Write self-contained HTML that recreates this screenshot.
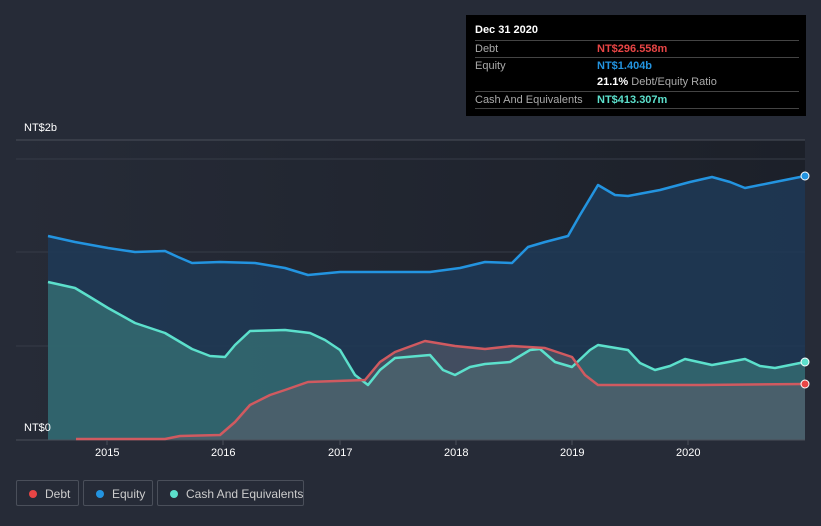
<!DOCTYPE html>
<html><head><meta charset="utf-8"><style>
body{margin:0;width:821px;height:526px;background:#262b37;font-family:"Liberation Sans",sans-serif;overflow:hidden;position:relative}
.tt{position:absolute;left:466px;top:15px;width:340px;height:101px;background:#000;color:#fff;font-size:11px}
.tt .h{position:absolute;left:9px;top:9px;font-weight:bold}
.row{position:absolute;left:9px;width:324px;border-top:1px solid #444;height:17px;line-height:17px;color:#aaa}
.row b{position:absolute;left:122px;font-weight:bold}
.lg{position:absolute;top:480px;height:26px;border:1px solid #4a4f5a;border-radius:2px;color:#ccc;font-size:12px;line-height:26px;box-sizing:border-box;white-space:nowrap}
.lg i{position:absolute;left:12px;top:9px;width:8px;height:8px;border-radius:50%}
.lg span{position:absolute;left:28px}
.ax{position:absolute;color:#fff;font-size:11px}
</style></head><body>
<svg width="821" height="526" style="position:absolute;left:0;top:0">
<defs><linearGradient id="bg" x1="0" x2="1"><stop offset="0" stop-color="#262b37"/><stop offset="1" stop-color="#1c2029"/></linearGradient></defs>
<rect x="16" y="140" width="789" height="300" fill="url(#bg)"/>
<line x1="16" y1="140" x2="805" y2="140" stroke="#4a4f5a"/>
<line x1="16" y1="159" x2="805" y2="159" stroke="#363b47"/>
<line x1="16" y1="252" x2="805" y2="252" stroke="#363b47"/>
<line x1="16" y1="346" x2="805" y2="346" stroke="#363b47"/>
<path d="M48,236 L75,242 L108,248 L135,252 L165,251 L178,257 L192,263 L220,262 L255,263 L285,268 L308,275 L340,272 L430,272 L460,268 L485,262 L512,263 L528,247 L545,242 L568,236 L580,215 L598,185 L615,195 L628,196 L660,190 L690,182 L712,177 L730,182 L745,188 L775,182 L805,176 L805,440 L48,440Z" fill="#1f3a57" fill-opacity="0.85"/>
<path d="M48,282 L75,288 L90,297 L108,308 L135,323 L165,333 L192,349 L210,356 L225,357 L235,345 L250,331 L285,330 L310,333 L325,340 L340,350 L355,375 L368,385 L380,370 L395,358 L430,355 L443,370 L455,375 L470,367 L485,364 L510,362 L530,350 L540,349 L555,362 L572,367 L590,350 L598,345 L628,350 L640,363 L655,370 L670,366 L685,359 L712,365 L745,359 L760,366 L775,368 L805,362 L805,440 L48,440Z" fill="#3a7b7b" fill-opacity="0.65"/>
<path d="M76,439 L165,439 L180,436 L220,435 L235,422 L250,405 L270,395 L285,390 L308,382 L365,380 L380,362 L395,352 L425,341 L455,346 L485,349 L512,346 L545,348 L572,357 L585,375 L598,385 L700,385 L805,384 L805,440 L76,440Z" fill="#5a5e6a" fill-opacity="0.6"/>
<line x1="16" y1="440" x2="805" y2="440" stroke="#4a4f5a"/>
<g fill="none" stroke-width="2.5" stroke-linejoin="round">
<path d="M48,236 L75,242 L108,248 L135,252 L165,251 L178,257 L192,263 L220,262 L255,263 L285,268 L308,275 L340,272 L430,272 L460,268 L485,262 L512,263 L528,247 L545,242 L568,236 L580,215 L598,185 L615,195 L628,196 L660,190 L690,182 L712,177 L730,182 L745,188 L775,182 L805,176" stroke="#2394e0"/>
<path d="M48,282 L75,288 L90,297 L108,308 L135,323 L165,333 L192,349 L210,356 L225,357 L235,345 L250,331 L285,330 L310,333 L325,340 L340,350 L355,375 L368,385 L380,370 L395,358 L430,355 L443,370 L455,375 L470,367 L485,364 L510,362 L530,350 L540,349 L555,362 L572,367 L590,350 L598,345 L628,350 L640,363 L655,370 L670,366 L685,359 L712,365 L745,359 L760,366 L775,368 L805,362" stroke="#5ce0cc"/>
<path d="M76,439 L165,439 L180,436 L220,435 L235,422 L250,405 L270,395 L285,390 L308,382 L365,380 L380,362 L395,352 L425,341 L455,346 L485,349 L512,346 L545,348 L572,357 L585,375 L598,385 L700,385 L805,384" stroke="#d05a60"/>
</g>
<circle cx="805" cy="176" r="4" fill="#2394e0" stroke="#fff"/>
<circle cx="805" cy="362" r="4" fill="#5ce0cc" stroke="#fff"/>
<circle cx="805" cy="384" r="4" fill="#e84545" stroke="#fff"/>
<g stroke="#4a4f5a"><line x1="107" y1="440" x2="107" y2="445"/><line x1="223" y1="440" x2="223" y2="445"/><line x1="340" y1="440" x2="340" y2="445"/><line x1="456" y1="440" x2="456" y2="445"/><line x1="572" y1="440" x2="572" y2="445"/><line x1="688" y1="440" x2="688" y2="445"/></g>
</svg>
<div class="ax" style="left:24px;top:122px">NT$2b</div>
<div class="ax" style="left:24px;top:422px">NT$0</div>
<div class="ax" style="left:95px;top:447px">2015</div>
<div class="ax" style="left:211px;top:447px">2016</div>
<div class="ax" style="left:328px;top:447px">2017</div>
<div class="ax" style="left:444px;top:447px">2018</div>
<div class="ax" style="left:560px;top:447px">2019</div>
<div class="ax" style="left:676px;top:447px">2020</div>
<div class="tt"><div class="h">Dec 31 2020</div>
<div class="row" style="top:25px">Debt<b style="color:#e84545">NT$296.558m</b></div>
<div class="row" style="top:42px">Equity<b style="color:#2394e0">NT$1.404b</b></div>
<div style="position:absolute;left:131px;top:59px;line-height:17px;color:#aaa"><b style="color:#fff">21.1%</b> Debt/Equity Ratio</div>
<div class="row" style="top:76px">Cash And Equivalents<b style="color:#5ce0cc">NT$413.307m</b></div>
<div class="row" style="top:93px;height:0"></div>
</div>
<div class="lg" style="left:16px;width:63px"><i style="background:#e84545"></i><span>Debt</span></div>
<div class="lg" style="left:83px;width:70px"><i style="background:#2394e0"></i><span>Equity</span></div>
<div class="lg" style="left:157px;width:147px"><i style="background:#5ce0cc"></i><span>Cash And Equivalents</span></div>
</body></html>
